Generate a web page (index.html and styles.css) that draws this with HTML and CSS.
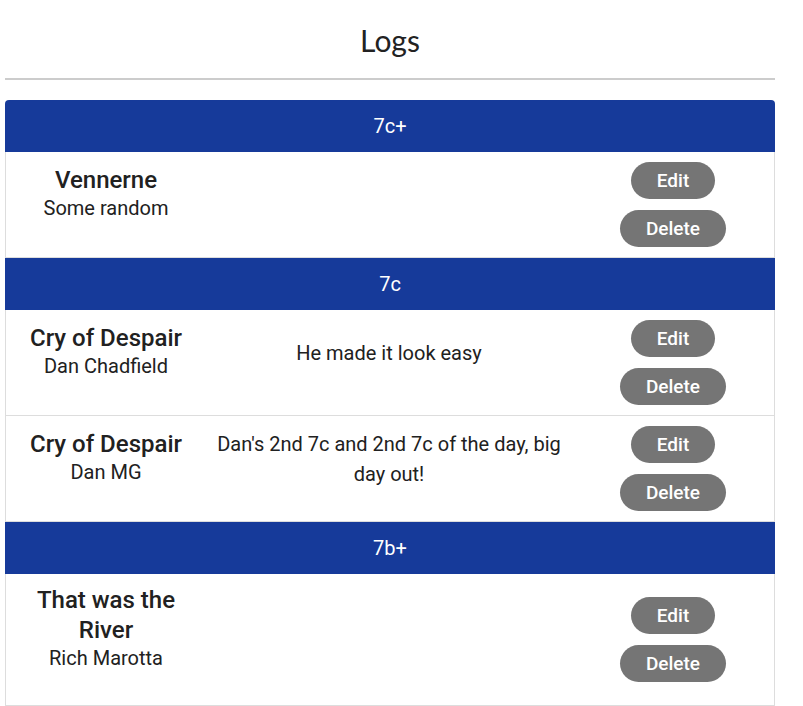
FILE: index.html
```html
<!DOCTYPE html>
<html>
<head>
<meta charset="utf-8">
<link rel="stylesheet" href="styles.css">
</head>
<body>
<div class="page">
  <h1 class="title">Logs</h1>
  <hr class="rule">
  <div class="group">
    <div class="grade">7c+</div>
    <div class="row">
      <div class="who"><div class="name">Vennerne</div><div class="sub">Some random</div></div>
      <div class="note"></div>
      <div class="actions"><button class="btn">Edit</button><button class="btn">Delete</button></div>
    </div>
  </div>
  <div class="group">
    <div class="grade">7c</div>
    <div class="row">
      <div class="who"><div class="name">Cry of Despair</div><div class="sub">Dan Chadfield</div></div>
      <div class="note"><p class="note-text">He made it look easy</p></div>
      <div class="actions"><button class="btn">Edit</button><button class="btn">Delete</button></div>
    </div>
    <div class="row">
      <div class="who"><div class="name">Cry of Despair</div><div class="sub">Dan MG</div></div>
      <div class="note"><p class="note-text">Dan's 2nd 7c and 2nd 7c of the day, big day out!</p></div>
      <div class="actions"><button class="btn">Edit</button><button class="btn">Delete</button></div>
    </div>
  </div>
  <div class="group">
    <div class="grade">7b+</div>
    <div class="row">
      <div class="who"><div class="name">That was the River</div><div class="sub">Rich Marotta</div></div>
      <div class="note"></div>
      <div class="actions"><button class="btn">Edit</button><button class="btn">Delete</button></div>
    </div>
  </div>
</div>
</body>
</html>
```
FILE: styles.css
```css
html, body { margin: 0; padding: 0; background: #fff; }
body { font-family: Roboto, "Liberation Sans", sans-serif; color: #212121; }
.page { width: 770px; margin: 0 0 0 5px; }
.title {
  margin: 0;
  padding-top: 20px;
  font-family: Lato, "Open Sans", sans-serif;
  font-weight: 400;
  font-size: 30px;
  line-height: 40px;
  text-align: center;
  color: #222;
}
.rule { margin: 18px 0 20px; border: 0; height: 2px; background: #cccccc; }
.grade {
  height: 52px;
  line-height: 52px;
  background: #163a9a;
  color: #fff;
  text-align: center;
  font-size: 20px;
}
.group:first-of-type .grade { border-radius: 4px 4px 0 0; }
.row {
  display: grid;
  grid-template-columns: 200px 1fr 202px;
  align-items: center;
  border: 1px solid #dddddd;
  border-top: 0;
}
.who { padding: 11px 0 9px; text-align: center; }
.name { font-size: 24px; font-weight: 500; line-height: 30px; padding: 0 20px; }
.sub { font-size: 20px; line-height: 27px; margin-bottom: 24px; }
.note { text-align: center; padding: 0; }
.note-text { margin: 0 0 20px; font-size: 20px; line-height: 30px; }
.actions { display: flex; flex-direction: column; align-items: center; gap: 11px; padding: 10px 0; }
.btn {
  height: 37px;
  padding: 0 26px;
  border: 0;
  border-radius: 19px;
  background: #757575;
  color: #fff;
  font-family: Roboto, "Liberation Sans", sans-serif;
  font-size: 19px;
  font-weight: 500;
}
```
